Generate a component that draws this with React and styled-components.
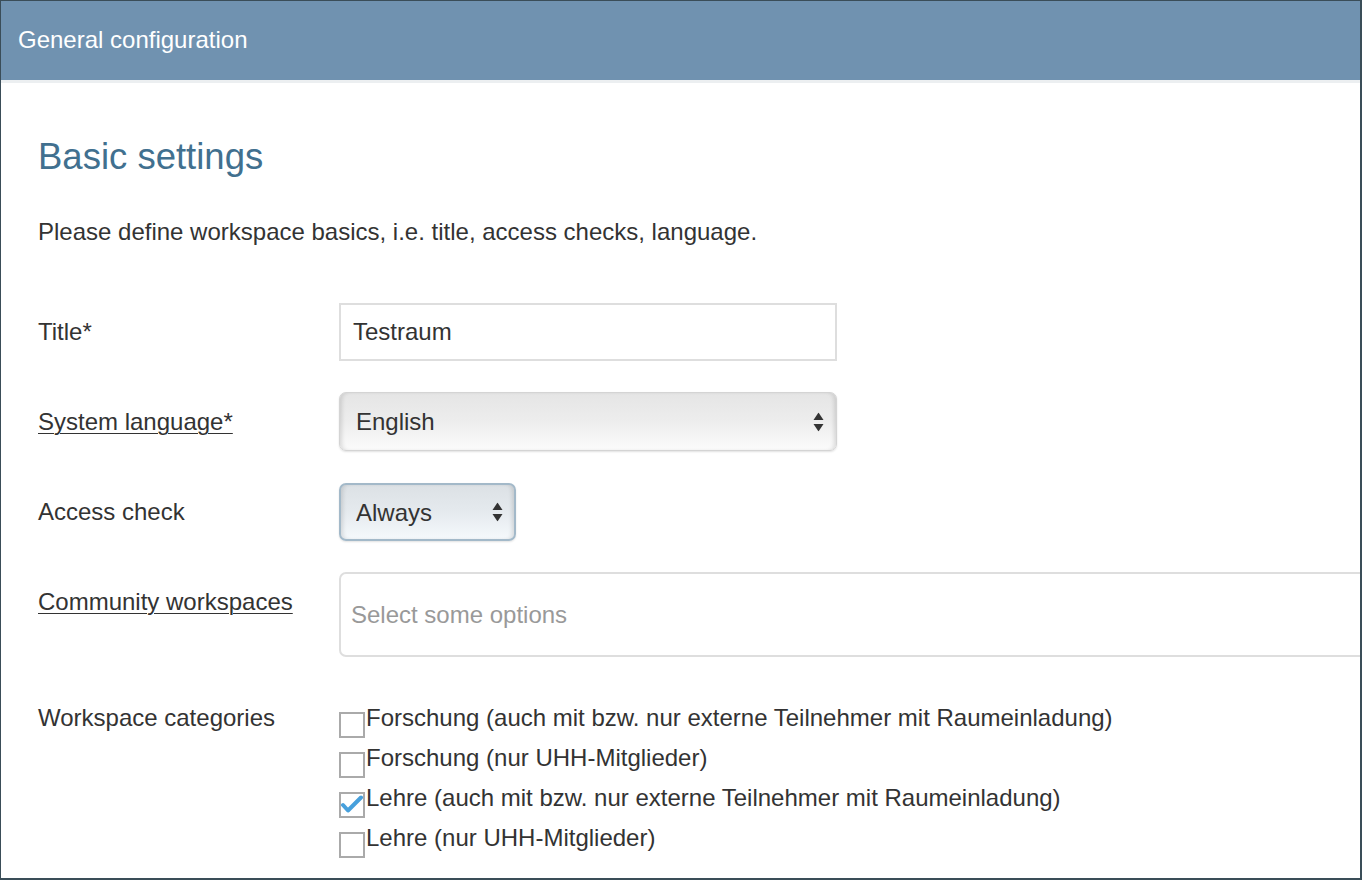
import React from "react";
import styled, { createGlobalStyle } from "styled-components";

const Global = createGlobalStyle`
  html, body { margin: 0; padding: 0; background: #fff; }
  body { font-family: "Liberation Sans", Arial, Helvetica, sans-serif; color: #333; }
  * { box-sizing: border-box; }
`;

const Frame = styled.div`
  width: 1362px;
  height: 880px;
  border-style: solid;
  border-color: #3a4d58;
  border-width: 1px 2px 2px 1px;
  overflow: hidden;
  display: flex;
  flex-direction: column;
  background: #fff;
`;

const Header = styled.header`
  flex: none;
  height: 82px;
  background: #7092b0;
  border-bottom: 3px solid #eceff1;
  display: flex;
  align-items: center;
  padding: 0 0 2px 17px;
`;

const HeaderTitle = styled.h1`
  margin: 0;
  font-size: 24px;
  font-weight: normal;
  color: #fff;
`;

const Content = styled.main`
  padding: 52px 0 0 37px;
  display: flex;
  flex-direction: column;
`;

const Heading = styled.h2`
  margin: 0;
  font-size: 36.5px;
  font-weight: normal;
  color: #41708f;
  line-height: 44px;
`;

const Intro = styled.p`
  margin: 39px 0 0;
  font-size: 24px;
  line-height: 28px;
`;

const Form = styled.div`
  margin-top: 57px;
  display: flex;
  flex-direction: column;
`;

const Row = styled.div`
  display: grid;
  grid-template-columns: 301px 1fr;
  align-items: start;
  margin-top: ${(p) => p.$gap || 0}px;
`;

const Label = styled.div`
  font-size: 24px;
  line-height: 28px;
  padding-top: ${(p) => p.$pt ?? 15}px;
  text-decoration: ${(p) => (p.$u ? "underline" : "none")};
  text-underline-offset: 3px;
  text-decoration-thickness: 1px;
`;

const TextInput = styled.input`
  width: 498px;
  height: 58px;
  border: 2px solid #dedede;
  padding: 0 12px;
  font-family: "Liberation Sans", Arial, sans-serif;
  font-size: 24px;
  color: #333;
  outline: none;
  background: #fff;
`;

const SelectWrap = styled.div`
  position: relative;
  width: ${(p) => p.$w}px;
  height: ${(p) => p.$h}px;
`;

const Select = styled.select`
  appearance: none;
  -webkit-appearance: none;
  width: 100%;
  height: 100%;
  border-radius: 7px;
  border: ${(p) => (p.$blue ? "2px solid #a3b9c9" : "1px solid #d4d4d4")};
  background: ${(p) =>
    p.$blue
      ? "linear-gradient(#dce1e5, #e5eaee 50%, #f5f9fc)"
      : "linear-gradient(#e5e5e5, #ededed 50%, #fbfbfb)"};
  box-shadow: inset 4px 0 4px -2px rgba(0, 0, 0, 0.12),
    inset -4px 0 4px -2px rgba(0, 0, 0, 0.12), 0 1px 2px rgba(0, 0, 0, 0.12);
  padding: 0 0 0 ${(p) => (p.$blue ? 15 : 16)}px;
  font-family: "Liberation Sans", Arial, sans-serif;
  font-size: 24px;
  color: #333;
  outline: none;
`;

const Arrows = styled.svg`
  position: absolute;
  right: 13px;
  top: 50%;
  transform: translateY(-50%);
  pointer-events: none;
`;

const MultiSelect = styled.div`
  width: 1040px;
  height: 85px;
  border: 2px solid #dedede;
  border-radius: 7px;
  display: flex;
  align-items: center;
  padding: 0 0 0 10px;
  font-size: 24px;
  color: #999;
`;

const CheckList = styled.div`
  display: flex;
  flex-direction: column;
`;

const CheckItem = styled.label`
  display: flex;
  align-items: center;
  height: 40px;
  font-size: 24px;
  line-height: 28px;
`;

const Box = styled.span`
  position: relative;
  width: 26px;
  height: 26px;
  border: 2px solid #aaa;
  background: #fff;
  flex: none;
  margin: 13px 1px 0 0;
`;

const Check = styled.svg`
  position: absolute;
  left: 0;
  top: 0;
`;

function UpDown() {
  return (
    <Arrows width="11" height="19" viewBox="0 0 11 19">
      <path d="M5.5 0 L10.5 7.5 L0.5 7.5 Z" fill="#333" />
      <path d="M5.5 19 L10.5 11.5 L0.5 11.5 Z" fill="#333" />
    </Arrows>
  );
}

const categories = [
  { text: "Forschung (auch mit bzw. nur externe Teilnehmer mit Raumeinladung)", checked: false },
  { text: "Forschung (nur UHH-Mitglieder)", checked: false },
  { text: "Lehre (auch mit bzw. nur externe Teilnehmer mit Raumeinladung)", checked: true },
  { text: "Lehre (nur UHH-Mitglieder)", checked: false },
];

export default function App() {
  return (
    <>
      <Global />
      <Frame>
        <Header>
          <HeaderTitle>General configuration</HeaderTitle>
        </Header>
        <Content>
          <Heading>Basic settings</Heading>
          <Intro>Please define workspace basics, i.e. title, access checks, language.</Intro>
          <Form>
            <Row>
              <Label>Title*</Label>
              <TextInput defaultValue="Testraum" />
            </Row>
            <Row $gap={31}>
              <Label $u $pt={16}>System language*</Label>
              <SelectWrap $w={498} $h={59}>
                <Select defaultValue="en">
                  <option value="en">English</option>
                </Select>
                <UpDown />
              </SelectWrap>
            </Row>
            <Row $gap={32}>
              <Label>Access check</Label>
              <SelectWrap $w={177} $h={58}>
                <Select $blue defaultValue="always">
                  <option value="always">Always</option>
                </Select>
                <UpDown />
              </SelectWrap>
            </Row>
            <Row $gap={31}>
              <Label $u $pt={16}>Community workspaces</Label>
              <MultiSelect>Select some options</MultiSelect>
            </Row>
            <Row $gap={41}>
              <Label $pt={6}>Workspace categories</Label>
              <CheckList>
                {categories.map((c) => (
                  <CheckItem key={c.text}>
                    <Box>
                      {c.checked && (
                        <Check width="22" height="22" viewBox="0 0 22 22">
                          <path
                            d="M2 11 L7 16.5 L20 3.5"
                            fill="none"
                            stroke="#47a0dc"
                            strokeWidth="4"
                            strokeLinecap="round"
                            strokeLinejoin="round"
                          />
                        </Check>
                      )}
                    </Box>
                    {c.text}
                  </CheckItem>
                ))}
              </CheckList>
            </Row>
          </Form>
        </Content>
      </Frame>
    </>
  );
}
